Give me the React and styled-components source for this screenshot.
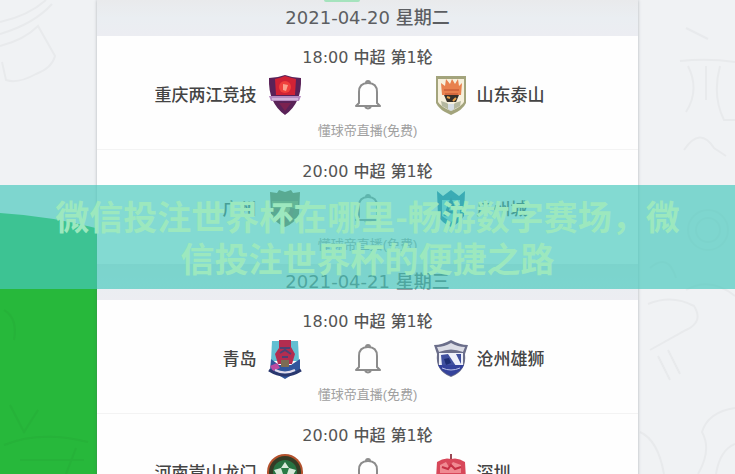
import React from "react";
import styled, { createGlobalStyle } from "styled-components";

const days = [
  {
    date: "2021-04-20 星期二",
    matches: [
      { time: "18:00", home: "重庆两江竞技", homeLogo: "chongqing", away: "山东泰山", awayLogo: "shandong" },
      { time: "20:00", home: "广州", homeLogo: "guangzhou", away: "广州城", awayLogo: "gzcity" },
    ],
  },
  {
    date: "2021-04-21 星期三",
    matches: [
      { time: "18:00", home: "青岛", homeLogo: "qingdao", away: "沧州雄狮", awayLogo: "cangzhou" },
      { time: "20:00", home: "河南嵩山龙门", homeLogo: "henan", away: "深圳", awayLogo: "shenzhen" },
    ],
  },
];

const crests = {
  chongqing: (
    <>
      <path d="M2 3 Q10 3 18 0 Q26 3 34 3 Q35 28 18 40 Q1 28 2 3Z" fill="#5a2258" />
      <path d="M8 4 Q13 3 18 1 Q24 3 29 4 L28 20 H9Z" fill="#d02235" />
      <circle cx="18" cy="12" r="6" fill="#f0403c" />
      <path d="M16 9 L21 10 L19 16 L16 15Z" fill="#fba08c" />
      <path d="M2 21 H34 L32 26 H4Z" fill="#b58ac0" />
      <path d="M5 24 H31" stroke="#d3b4da" strokeWidth="2" />
      <path d="M12 28 H24 L18 36Z" fill="#7c2150" />
    </>
  ),
  shandong: (
    <>
      <path d="M3 1 H33 V28 Q30 35 18 40 Q6 35 3 28Z" fill="#a3a47c" />
      <path d="M5 4 H31 V27 Q28 32 18 36 Q8 32 5 27Z" fill="#f6f0dc" />
      <path d="M9 20 L8 8 L12 11 L13 4 L17 9 L19 4 L22 9 L25 4 L26 11 L29 8 L28 20Z" fill="#e8814e" />
      <path d="M11 15 H26 M12 19 H25" stroke="#d2683e" strokeWidth="2" />
      <path d="M11 20 H26 L23 27 H14Z" fill="#35302a" />
      <path d="M14 22 L17 23 M20 26 L23 23" stroke="#e9a24c" strokeWidth="2" />
      <path d="M8 26 L14 28 L18 32 L22 28 L28 26 L27 31 L18 36 L9 31Z" fill="#b5b8a0" />
      <path d="M15 29 H21 V34 L18 36 L15 34Z" fill="#d6dde3" />
    </>
  ),
  guangzhou: (
    <>
      <path d="M3 3 L10 4 L12 1 L18 3 L24 1 L26 4 L33 3 L32 25 Q28 34 18 38 Q8 34 4 25Z" fill="#7d6a38" />
      <path d="M5 12 H31 V19 H5Z" fill="#9c9046" />
      <path d="M9 20 H27 L25 29 L18 34 L11 29Z" fill="#8a5a35" />
      <circle cx="18" cy="20" r="5" fill="#c3a755" />
    </>
  ),
  gzcity: (
    <>
      <path d="M4 2 L10 7 L18 1 L26 7 L32 2 L31 27 Q27 34 18 38 Q9 34 5 27Z" fill="#1c6ea2" />
      <path d="M9 11 H27 V27 L18 33 L9 27Z" fill="#8fd2e4" />
      <path d="M12 27 L18 12 L24 27 M14 23 H22" stroke="#155a90" strokeWidth="3" fill="none" />
    </>
  ),
  qingdao: (
    <>
      <path d="M5 2 H31 L32 22 H4Z" fill="#62bfd2" />
      <path d="M12 1 H24 V8 L28 15 L25 25 H11 L8 15 L12 9Z" fill="#b32d50" />
      <path d="M13 9 H23 M13 14 L18 11 L24 15 M15 18 H21" stroke="#4d4274" strokeWidth="2" fill="none" />
      <path d="M4 20 L12 26 L24 26 L33 20 L33 31 L18 40 L3 31Z" fill="#31569c" />
      <path d="M3 27 L10 24 L13 29 L6 32Z" fill="#bd4ba0" />
      <path d="M14 21 H22 V28 H14Z" fill="#7b6c55" />
      <path d="M2 31 Q18 41 34 31" stroke="#29376e" strokeWidth="3" fill="none" />
      <path d="M8 31 Q18 36 28 31" stroke="#e1dcec" strokeWidth="2" fill="none" />
    </>
  ),
  cangzhou: (
    <>
      <path d="M1 6 Q9 6 18 1 Q27 6 35 6 L32 15 Q34 32 18 38 Q2 32 4 15Z" fill="#6b6e8a" />
      <path d="M4 8 Q11 8 18 4 Q25 8 32 8 L30 13 Q18 8 6 13Z" fill="#dcdde6" />
      <path d="M6 14 H30 V26 H6Z" fill="#eef0fa" />
      <path d="M8 16 L15 15 L23 27 H9 M23 15 H28 V25Z" fill="#40509f" />
      <path d="M11 20 L16 19 L18 24 L13 26Z" fill="#1d2d73" />
      <path d="M5 26 H31 Q28 33 18 37 Q8 33 5 26Z" fill="#34429b" />
      <path d="M9 29 Q18 33 27 29" stroke="#b9c0e8" strokeWidth="1" fill="none" />
    </>
  ),
  henan: (
    <>
      <circle cx="18" cy="19" r="18" fill="#b3522d" />
      <circle cx="18" cy="19" r="16" fill="#343c26" />
      <circle cx="18" cy="19" r="12" fill="#277342" />
      <path d="M18 9 L22 15 L29 17 L25 24 H11 L7 17 L14 15Z" fill="#d7eadb" />
      <path d="M14 15 H22 L20 21 H16Z" fill="#287b45" />
    </>
  ),
  shenzhen: (
    <>
      <path d="M17 1 H19 V7 H17Z" fill="#9a4854" />
      <path d="M4 9 Q11 4 18 6 Q25 4 32 9 L33 26 L18 38 L3 26Z" fill="#d8485a" />
      <path d="M7 12 L13 9 L16 14 L20 9 L28 12 V20 H7Z" fill="#f08a92" />
      <path d="M9 14 L15 16 L18 12 L22 16 L28 14" stroke="#c73045" strokeWidth="2" fill="none" />
    </>
  ),
};

const Crest = ({ name }) => (
  <CrestSvg viewBox="0 0 36 40" aria-hidden="true">
    {crests[name]}
  </CrestSvg>
);

const Bell = () => (
  <BellSvg viewBox="0 0 28 32" aria-hidden="true">
    <path d="M2 27 L5 24 V13 Q5 4 14 4 Q23 4 23 13 V24 L26 27Z" />
    <path d="M12 4 Q12 2 14 2 Q16 2 16 4 M11 28 Q14 31 17 28" />
  </BellSvg>
);

const Match = ({ match }) => (
  <MatchRow>
    <MatchTime>{match.time} 中超 第1轮</MatchTime>
    <Teams>
      <Team $home>
        <TeamName>{match.home}</TeamName>
        <Crest name={match.homeLogo} />
      </Team>
      <BellButton type="button" aria-label="提醒">
        <Bell />
      </BellButton>
      <Team>
        <Crest name={match.awayLogo} />
        <TeamName>{match.away}</TeamName>
      </Team>
    </Teams>
    <Channel>懂球帝直播(免费)</Channel>
  </MatchRow>
);

const Backdrop = () => (
  <BackdropSvg viewBox="0 0 735 474" preserveAspectRatio="none" aria-hidden="true">
    <path d="M0 213 Q50 216 100 229 V474 H0Z" fill="#27b83b" />
    <g fill="none" stroke="#26b239" strokeWidth="2">
      <path d="M4 310 Q18 318 14 340 M10 405 L24 432 L38 410 M4 445 Q40 430 88 442 M20 460 H84 M66 474 L76 448" />
    </g>
    <g fill="none" stroke="#e8eaec" strokeWidth="2">
      <path d="M0 22 Q28 16 46 0 M0 34 Q34 24 52 4 M0 46 Q24 40 38 26 L55 56 Q52 68 36 74 Q18 84 6 80 L2 62" />
      <path d="M686 28 L708 39 M680 61 Q708 58 735 62 M688 66 Q700 90 686 112 M706 66 V100 M720 66 Q712 96 724 120 H735 M684 150 Q700 126 714 148 L726 156" />
      <path d="M648 304 Q672 294 694 306 Q704 322 686 330 L650 350 M658 356 L670 380 M668 350 L680 374 M640 432 Q658 440 664 474" />
      <path d="M698 474 Q712 450 702 432 Q708 412 735 408 M716 474 Q720 450 735 444" />
      <circle cx="708" cy="230" r="20" />
      <circle cx="708" cy="230" r="12" />
      <path d="M650 268 Q668 252 676 278 M686 290 Q710 276 735 296" />
    </g>
  </BackdropSvg>
);

export default function App() {
  return (
    <Page>
      <GlobalStyle />
      <Backdrop />
      <Schedule>
        {days.map((day, i) => (
          <section key={day.date}>
            <DayHeader $active={i === 0}>{day.date}</DayHeader>
            {day.matches.map((match) => (
              <Match key={match.time} match={match} />
            ))}
          </section>
        ))}
      </Schedule>
      <Banner>
        <Title>微信投注世界杯在哪里-畅游数字赛场，微信投注世界杯的便捷之路</Title>
      </Banner>
    </Page>
  );
}

const GlobalStyle = createGlobalStyle`
  * {
    box-sizing: border-box;
  }
  body {
    margin: 0;
    font-family: "DejaVu Sans", "Noto Sans CJK SC", sans-serif;
  }
`;

const Page = styled.div`
  position: relative;
  height: 100vh;
  overflow: hidden;
  background: #f0f2f4;
`;

const BackdropSvg = styled.svg`
  position: absolute;
  inset: 0;
  width: 100%;
  height: 100%;
`;

const Schedule = styled.main`
  position: relative;
  width: 73.5%;
  min-height: 100%;
  margin: 0 auto;
  background: #fefefe;
  box-shadow: 0 0 3px rgba(80, 90, 100, 0.4);
`;

const DayHeader = styled.h2`
  position: relative;
  margin: 0;
  height: 36px;
  background: linear-gradient(#e9eaec, #eaeef2 50%, #ecedf2);
  color: #5c5e62;
  font-size: 18px;
  font-weight: 500;
  line-height: 36px;
  text-align: center;

  &::before {
    content: "";
    display: ${({ $active }) => ($active ? "block" : "none")};
    position: absolute;
    top: 0;
    left: calc(50% - 44px);
    width: 36px;
    height: 2px;
    border-radius: 0 0 18px 18px;
    background: #a5e3bd;
  }
`;

const MatchRow = styled.article`
  padding: 12px 0 8px;
  border-bottom: 1px solid #f3f3f3;
  text-align: center;

  &:last-child {
    border-bottom-color: transparent;
  }
`;

const MatchTime = styled.div`
  color: #555;
  font-size: 16px;
  font-weight: 500;
  line-height: 20px;
`;

const Teams = styled.div`
  display: grid;
  grid-template-columns: 1fr 130px 1fr;
  align-items: center;
  height: 40px;
  margin: 7px 0 6px;
`;

const Team = styled.div`
  display: flex;
  align-items: center;
  justify-content: ${({ $home }) => ($home ? "flex-end" : "flex-start")};
  gap: ${({ $home }) => ($home ? "10px" : "8px")};
`;

const TeamName = styled.span`
  color: #444;
  font-size: 17px;
  font-weight: 500;
  line-height: 24px;
  white-space: nowrap;
`;

const CrestSvg = styled.svg`
  flex: none;
  width: 36px;
  height: 40px;
`;

const BellButton = styled.button`
  justify-self: center;
  display: flex;
  padding: 0;
  border: 0;
  background: none;
  cursor: pointer;
`;

const BellSvg = styled.svg`
  width: 28px;
  height: 32px;
  fill: none;
  stroke: #8c8c8c;
  stroke-width: 2;
  stroke-linejoin: round;
`;

const Channel = styled.div`
  color: #a0a0a0;
  font-family: "Liberation Sans", "Noto Sans CJK SC", sans-serif;
  font-size: 13px;
  line-height: 20px;
`;

const Banner = styled.header`
  position: absolute;
  top: 50%;
  left: 0;
  right: 0;
  transform: translateY(-50%);
  padding: 10px 50px;
  background: rgba(72, 201, 189, 0.68);
`;

const Title = styled.h1`
  margin: 0;
  color: #9ce8be;
  font-family: "Noto Sans CJK SC", sans-serif;
  font-size: 34px;
  font-weight: 700;
  line-height: 42px;
  text-align: center;
`;
